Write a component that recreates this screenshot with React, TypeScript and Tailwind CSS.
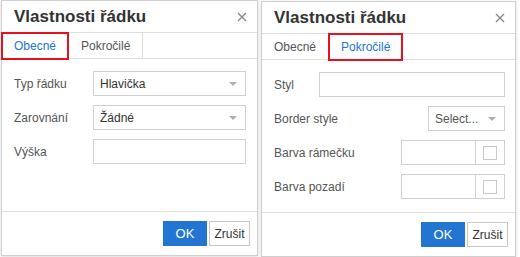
import React from 'react';

const font = { fontFamily: '"Liberation Sans", Arial, sans-serif' };

function Caret() {
  return (
    <svg width="8" height="4" viewBox="0 0 8 4" className="shrink-0">
      <path d="M0 0h8L4 4z" fill="#b0b0b0" />
    </svg>
  );
}

function Select({ value, className }: { value: string; className: string }) {
  return (
    <div className={`flex items-center justify-between border border-[#d0d0d0] bg-white pl-[6px] pr-[8px] text-[12px] text-[#333] ${className}`}>
      <span>{value}</span>
      <Caret />
    </div>
  );
}

function Input({ className }: { className: string }) {
  return <div className={`border border-[#d0d0d0] bg-white ${className}`} />;
}

function ColorField() {
  return (
    <div className="flex h-[25px] w-[104px] border border-[#d0d0d0] bg-white">
      <div className="flex-1 border-r border-[#d0d0d0]" />
      <div className="flex w-[28px] items-center justify-center">
        <div className="h-[14px] w-[14px] border border-[#c8c8c8]" />
      </div>
    </div>
  );
}

function Dialog({
  active,
  className,
  children,
}: {
  active: 0 | 1;
  className: string;
  children: React.ReactNode;
}) {
  return (
    <div className={`flex flex-col border border-[#cfcfcf] bg-white shadow-[0_1px_3px_rgba(0,0,0,0.15)] ${className}`}>
      {/* header */}
      <div className="flex h-[32px] items-center justify-between border-b border-[#dedede] pl-[12px] pr-[10px]">
        <span className="text-[17px] font-bold text-[#333]">Vlastnosti řádku</span>
        <svg width="10" height="10" viewBox="0 0 10 10">
          <path d="M1 1l8 8M9 1L1 9" stroke="#8a8a8a" strokeWidth="1.4" />
        </svg>
      </div>
      {/* tabs */}
      <div className="flex h-[26px] border-b border-[#dedede] text-[12px]">
        {['Obecné', 'Pokročilé'].map((t, i) => (
          <div
            key={t}
            className={`relative flex items-center px-[12px] ${i === 0 && active === 1 ? '' : 'border-r border-[#dedede]'} ${i === active ? 'text-[#2276d2]' : 'text-[#555]'} ${i === 0 ? 'w-[67px]' : 'w-[74px]'}`}
          >
            {t}
            {i === active && (
              <div className="absolute inset-x-[-1px] top-[-1px] bottom-[-2px] border-2 border-[#e8101e]" />
            )}
          </div>
        ))}
      </div>
      {/* body */}
      <div className="flex-1 pl-[12px] pr-[10px] pt-[12px] text-[12px] text-[#555]">{children}</div>
      {/* footer */}
      <div className="flex h-[44px] items-center justify-end gap-[2px] border-t border-[#dedede] pr-[7px]">
        <div className="flex h-[25px] w-[44px] items-center justify-center bg-[#2276d2] text-[13px] text-white">OK</div>
        <div className="flex h-[25px] w-[41px] items-center justify-center border border-[#c8c8c8] text-[12px] text-[#333]">Zrušit</div>
      </div>
    </div>
  );
}

export default function App() {
  return (
    <div className="flex h-[257px] w-[520px] items-start gap-[3px] bg-white" style={font}>
      <Dialog active={0} className="ml-[1px] h-[256px] w-[257px]">
        <div className="flex flex-col gap-[9px]">
          <div className="flex items-center">
            <span className="w-[79px]">Typ řádku</span>
            <Select value="Hlavička" className="h-[25px] w-[153px]" />
          </div>
          <div className="flex items-center">
            <span className="w-[79px]">Zarovnání</span>
            <Select value="Žádné" className="h-[25px] w-[153px]" />
          </div>
          <div className="flex items-center">
            <span className="w-[79px]">Výška</span>
            <Input className="h-[25px] w-[153px]" />
          </div>
        </div>
      </Dialog>
      <Dialog active={1} className="mt-[1px] h-[256px] w-[255px]">
        <div className="flex flex-col gap-[9px]">
          <div className="flex items-center">
            <span className="w-[45px]">Styl</span>
            <Input className="h-[25px] w-[186px]" />
          </div>
          <div className="flex items-center justify-between">
            <span>Border style</span>
            <Select value="Select..." className="h-[25px] w-[77px] pl-[5px] text-[#555]" />
          </div>
          <div className="flex items-center justify-between">
            <span>Barva rámečku</span>
            <ColorField />
          </div>
          <div className="flex items-center justify-between">
            <span>Barva pozadí</span>
            <ColorField />
          </div>
        </div>
      </Dialog>
    </div>
  );
}
